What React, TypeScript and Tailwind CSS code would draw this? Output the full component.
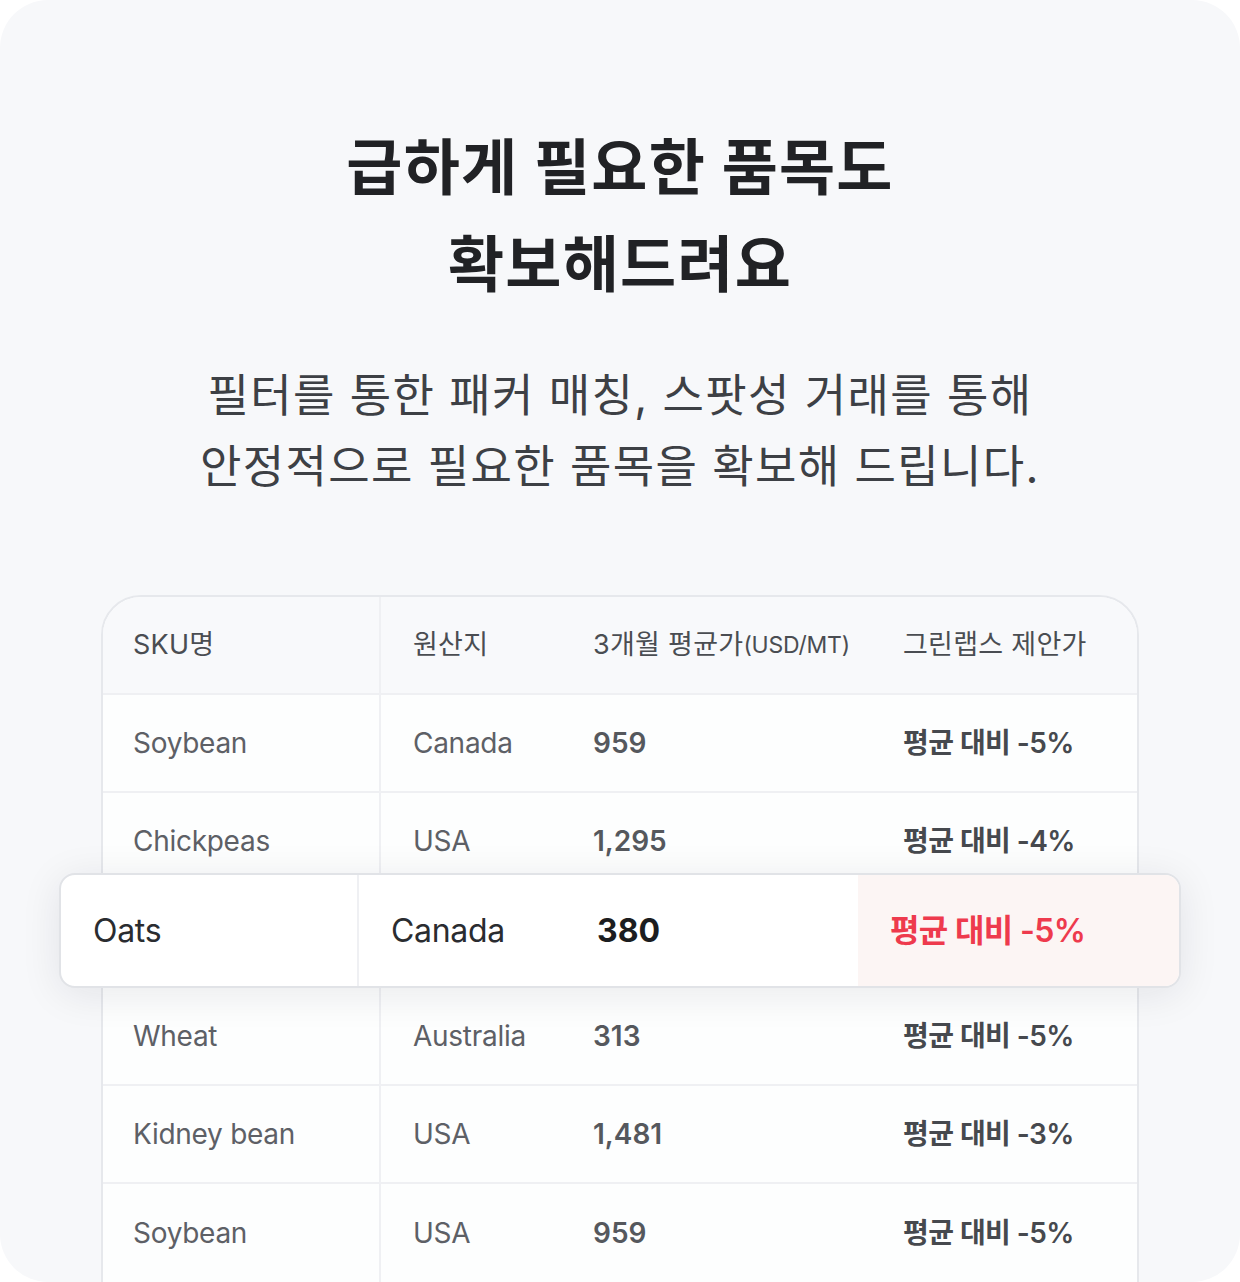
import React from 'react';

interface Row {
  sku: string;
  origin: string;
  price: string;
  offer: string;
}

const rowsTop: Row[] = [
  { sku: 'Soybean', origin: 'Canada', price: '959', offer: '평균 대비 -5%' },
  { sku: 'Chickpeas', origin: 'USA', price: '1,295', offer: '평균 대비 -4%' },
];

const rowsBottom: Row[] = [
  { sku: 'Wheat', origin: 'Australia', price: '313', offer: '평균 대비 -5%' },
  { sku: 'Kidney bean', origin: 'USA', price: '1,481', offer: '평균 대비 -3%' },
  { sku: 'Soybean', origin: 'USA', price: '959', offer: '평균 대비 -5%' },
];

const font = { fontFamily: 'Inter, "Noto Sans CJK KR", sans-serif' };

const TableRow = ({ row, last }: { row: Row; last?: boolean }) => (
  <div
    className={`grid grid-cols-[278px_180px_310px_1fr] h-[98px] bg-[#fdfefe] ${
      last ? '' : 'border-b-2 border-[#eff0f3]'
    }`}
  >
    <div className="flex items-center pl-[30px] border-r-2 border-[#eff0f3] text-[28px] text-[#5d6066] tracking-[-0.01em]">
      {row.sku}
    </div>
    <div className="flex items-center pl-[32px] text-[28px] text-[#5d6066] tracking-[-0.01em]">
      {row.origin}
    </div>
    <div className="flex items-center pl-[32px] text-[28px] font-semibold text-[#55585d]">
      {row.price}
    </div>
    <div className="flex items-center pl-[32px] text-[28px] font-semibold text-[#46494e] tracking-[-0.02em]">
      {row.offer}
    </div>
  </div>
);

const App = () => {
  return (
    <div className="w-[1240px] h-[1282px] bg-white" style={font}>
      <div className="w-[1240px] h-[1282px] rounded-[48px] bg-[#f7f8fa] overflow-hidden flex flex-col items-center pt-[120px]">
        {/* Heading */}
        <h1 className="text-[61px] leading-[97px] font-bold text-[#212225] text-center tracking-[0.02em]">
          급하게 필요한 품목도
          <br />
          확보해드려요
        </h1>
        <p className="mt-[46px] text-[45px] leading-[71px] text-[#3d4045] text-center tracking-[0.03em] whitespace-nowrap">
          필터를 통한 패커 매칭, 스팟성 거래를 통해
          <br />
          안정적으로 필요한 품목을 확보해 드립니다.
        </p>

        {/* Price table */}
        <div className="mt-[93px] w-[1038px] shrink-0 rounded-t-[40px] border-2 border-[#e6e8ec] bg-[#fdfefe]">
          <div className="grid grid-cols-[278px_180px_310px_1fr] h-[98px] bg-[#f8f9fb] rounded-t-[38px] border-b-2 border-[#eff0f3] text-[27px] text-[#4a4d52] tracking-[0.01em]">
            <div className="flex items-center pl-[30px] border-r-2 border-[#eff0f3]">SKU명</div>
            <div className="flex items-center pl-[32px]">원산지</div>
            <div className="flex items-center pl-[32px] whitespace-nowrap">
              3개월 평균가<span className="text-[23px] tracking-[-0.01em]">(USD/MT)</span>
            </div>
            <div className="flex items-center pl-[32px]">그린랩스 제안가</div>
          </div>

          {rowsTop.map((r, i) => (
            <TableRow key={i} row={r} />
          ))}

          {/* Highlighted row */}
          <div className="relative z-10 -mt-[18px] -mx-[44px] h-[115px] rounded-[16px] border-2 border-[#e1e3e7] bg-white overflow-hidden shadow-[0_6px_40px_rgba(20,24,40,0.09)] grid grid-cols-[298px_206px_293px_1fr]">
            <div className="flex items-center pl-[32px] border-r-2 border-[#eff0f3] text-[32px] text-[#2a2c30] tracking-[-0.01em]">
              Oats
            </div>
            <div className="flex items-center pl-[32px] text-[32px] text-[#2a2c30] tracking-[-0.01em]">
              Canada
            </div>
            <div className="flex items-center pl-[32px] text-[32px] font-bold text-[#1c1d20]">
              380
            </div>
            <div className="flex items-center pl-[32px] bg-[#fcf5f4] text-[32px] font-semibold text-[#ee3a4d] tracking-[-0.02em]">
              평균 대비 -5%
            </div>
          </div>

          {rowsBottom.map((r, i) => (
            <TableRow key={i} row={r} last={i === rowsBottom.length - 1} />
          ))}
        </div>
      </div>
    </div>
  );
};

export default App;
